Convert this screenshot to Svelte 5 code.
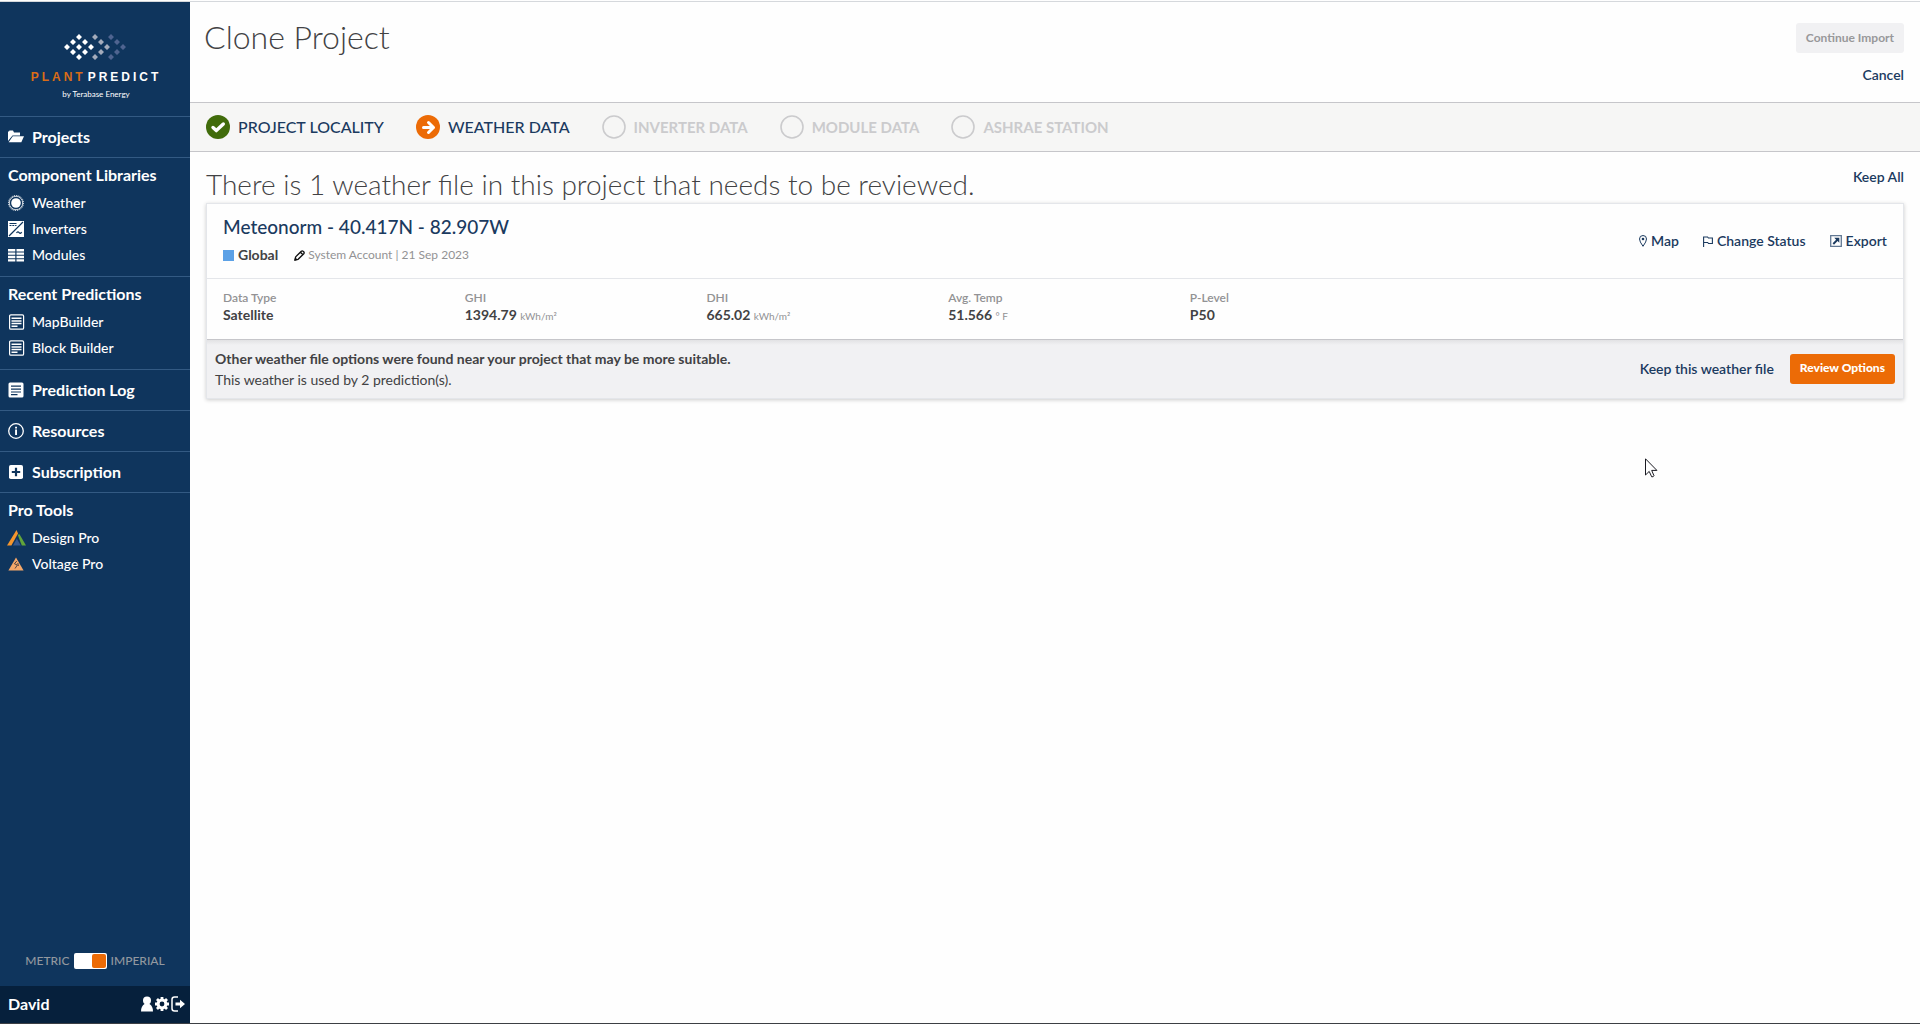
<script>
    let imperial = true;

    const libraries = [
        { name: 'Weather', icon: 'sun' },
        { name: 'Inverters', icon: 'inverter' },
        { name: 'Modules', icon: 'modules' }
    ];

    const predictions = ['MapBuilder', 'Block Builder'];

    const links = [
        { name: 'Prediction Log', icon: 'log' },
        { name: 'Resources', icon: 'info' },
        { name: 'Subscription', icon: 'plus' }
    ];

    const steps = [
        { name: 'Project Locality', state: 'done' },
        { name: 'Weather Data', state: 'current' },
        { name: 'Inverter Data', state: 'pending' },
        { name: 'Module Data', state: 'pending' },
        { name: 'Ashrae Station', state: 'pending' }
    ];

    const stats = [
        { label: 'Data Type', value: 'Satellite' },
        { label: 'GHI', value: '1394.79', unit: 'kWh/m²' },
        { label: 'DHI', value: '665.02', unit: 'kWh/m²' },
        { label: 'Avg. Temp', value: '51.566', unit: '° F' },
        { label: 'P-Level', value: 'P50' }
    ];

    // centres of the logo tiles: a diamond first, then two chevrons
    const diamond = [[15, 3], [9, 8], [21, 8], [3, 13], [15, 13], [27, 13], [9, 18], [21, 18], [15, 23]];
    const chevron = [[31, 3], [37, 8], [43, 13], [37, 18], [31, 23]];
    const lastChevron = [[47, 3], [53, 8], [59, 13], [53, 18], [47, 23]];
    const tile = ([x, y]) => `M${x - 3} ${y}l3-3 3 3-3 3z`;
</script>

{#snippet icon(name)}
    <svg class="icon" viewBox="0 0 16 16" aria-hidden="true">
        {#if name === 'folder'}
            <path fill="#fff" d="M0 2.5h1l.5-1H5l1 2h6v3H4.5L0 12z" />
            <path fill="#fff" d="M4.8 7.3H16l-2.7 6H0.6z" />
        {:else if name === 'sun'}
            <circle cx="8" cy="8" r="4.8" fill="#fff" />
            <circle cx="8" cy="8" r="6.7" fill="none" stroke="#fff" stroke-width=".8" />
            <circle cx="8" cy="8" r="7.5" fill="none" stroke="#fff" stroke-width="1" stroke-dasharray="1.2 1.15" />
        {:else if name === 'inverter'}
            <path fill="#fff" d="M0 0h16v16H0z" />
            <path fill="none" stroke="#0f355d" stroke-width="1.2" d="M1 15 15 1M1.5 2.5h7M1.5 4.5h2m.8 0h2m.8 0h1.4M8.5 12q1.3-2 2.6-.4t2.6-.4" />
        {:else if name === 'modules'}
            <path fill="#fff" d="M0 2h7.3v2.4H0zM8.5 2H16v2.4H8.5zM0 5.4h7.3v2.4H0zM8.5 5.4H16v2.4H8.5zM0 8.8h7.3v2.4H0zM8.5 8.8H16v2.4H8.5zM0 12.2h7.3v2.4H0zM8.5 12.2H16v2.4H8.5z" />
        {:else if name === 'report'}
            <rect x="1.6" y=".8" width="14" height="14.4" rx="1.3" fill="none" stroke="#fff" stroke-width="1.2" />
            <path stroke="#fff" stroke-width="1.5" d="M3.5 4.2h10M3.5 6.9h10M3.5 9.5h10M3.5 12.2h6" />
        {:else if name === 'log'}
            <rect x=".5" y=".5" width="15" height="15" rx="1.5" fill="#fff" />
            <path stroke="#0f355d" stroke-width="1.2" d="M3 4.2h10M3 7.2h10M3 10h10M3 12.6h6.5" />
        {:else if name === 'info'}
            <circle cx="8" cy="8" r="7.3" fill="none" stroke="#fff" stroke-width="1.3" />
            <path fill="#fff" d="M7.1 3.8H9v1.7H7.1zM7.1 6.5H9v5.6H7.1z" />
        {:else if name === 'plus'}
            <rect x="1" y="1" width="14" height="14" rx="1.8" fill="#fff" />
            <path stroke="#0f355d" stroke-width="2.2" d="M8 3.8v8.4M3.8 8h8.4" />
        {:else if name === 'design'}
            <path fill="#f5962d" d="M8.5 0 10 3.5 3.4 15.5H-1z" />
            <path fill="#62a53b" d="M9.7 4.7 11.5 4.2 18 15.5h-4.2z" />
            <path fill="#35588e" d="M8.8 8.7 12.8 15.5H5z" />
        {:else if name === 'voltage'}
            <path fill="#f5a869" d="M8 1.5 15.6 14.5H.4z" />
            <path fill="none" stroke="#423a3d" stroke-width=".9" d="M8.8 5 6.4 7.8l3 1.2-2.4 3.5M9.8 7l.6 3" />
        {/if}
    </svg>
{/snippet}

<div class="layout">
    <aside>
        <div class="logo">
            <svg viewBox="0 0 64 26" width="64" height="26" aria-hidden="true">
                <path fill="#fff" d={diamond.map(tile).join('')} />
                <path fill="#a3abbb" d={chevron.map(tile).join('')} />
                <path fill="#4f6490" d={lastChevron.map(tile).join('')} />
            </svg>
            <div class="brand"><b>PLANT</b><span>PREDICT</span></div>
            <small>by Terabase Energy</small>
        </div>

        <nav>
            <a class="single" href="#projects">{@render icon('folder')}Projects</a>

            <section>
                <h2>Component Libraries</h2>
                {#each libraries as item}
                    <a href="#library">{@render icon(item.icon)}{item.name}</a>
                {/each}
            </section>

            <section>
                <h2>Recent Predictions</h2>
                {#each predictions as name}
                    <a href="#prediction">{@render icon('report')}{name}</a>
                {/each}
            </section>

            {#each links as link}
                <a class="single" href="#link">{@render icon(link.icon)}{link.name}</a>
            {/each}

            <section>
                <h2>Pro Tools</h2>
                <a href="#design">{@render icon('design')}Design Pro</a>
                <a href="#voltage">{@render icon('voltage')}Voltage Pro</a>
            </section>
        </nav>

        <label class="units">
            <span>METRIC</span>
            <input type="checkbox" role="switch" bind:checked={imperial} />
            <span>IMPERIAL</span>
        </label>

        <footer>
            <span>David</span>
            <button aria-label="Profile">
                <svg viewBox="0 0 12 16" width="12" height="16">
                    <circle cx="6" cy="4.5" r="4" fill="#fff" />
                    <path fill="#fff" d="M3.5 8h5Q12 10 12 15.5H0Q0 10 3.5 8z" />
                </svg>
            </button>
            <button aria-label="Settings">
                <svg viewBox="0 0 14 14" width="14" height="14">
                    <circle cx="7" cy="7" r="3.9" fill="none" stroke="#fff" stroke-width="3" />
                    <path stroke="#fff" stroke-width="2.8" d="M7 0v2.5M7 11.5V14M0 7h2.5M11.5 7H14M2 2l1.9 1.9M10.1 10.1 12 12M2 12l1.9-1.9M10.1 3.9 12 2" />
                </svg>
            </button>
            <button aria-label="Log out">
                <svg viewBox="0 0 14 16" width="14" height="16">
                    <path fill="none" stroke="#fff" stroke-width="1.5" d="M7 1H3.5Q1 1 1 3.5v9Q1 15 3.5 15H7" />
                    <path fill="#fff" d="M4.5 6.5H9V3.8L14 8l-5 4.2V9.5H4.5z" />
                </svg>
            </button>
        </footer>
    </aside>

    <main>
        <header class="page-header">
            <h1>Clone Project</h1>
            <div class="page-actions">
                <button class="btn" disabled>Continue Import</button>
                <a href="#cancel">Cancel</a>
            </div>
        </header>

        <ol class="steps">
            {#each steps as step}
                <li class={step.state}>
                    <svg viewBox="0 0 24 24" width="24" height="24" aria-hidden="true">
                        {#if step.state === 'done'}
                            <circle cx="12" cy="12" r="12" fill="#416c0b" />
                            <path fill="none" stroke="#fff" stroke-width="3.4" stroke-linejoin="round" stroke-linecap="round" d="M7 12.5 10.3 15.6 17.3 9" />
                        {:else if step.state === 'current'}
                            <circle cx="12" cy="12" r="12" fill="#ec6b06" />
                            <path fill="none" stroke="#fff" stroke-width="3" stroke-linejoin="round" stroke-linecap="round" d="M7.5 12.5h10M12.5 7.5l5 5-5 5" />
                        {:else}
                            <circle cx="12" cy="12" r="11" fill="none" stroke="#cbcbcd" stroke-width="1.6" />
                        {/if}
                    </svg>
                    {step.name}
                </li>
            {/each}
        </ol>

        <div class="content">
            <div class="intro">
                <h2>There is 1 weather file in this project that needs to be reviewed.</h2>
                <a href="#keep-all">Keep All</a>
            </div>

            <article class="card">
                <div class="card-header">
                    <div>
                        <h3><a href="#weather-file">Meteonorm - 40.417N - 82.907W</a></h3>
                        <div class="meta">
                            <span class="swatch"></span>
                            <strong>Global</strong>
                            <svg viewBox="0 0 12 12" width="11" height="11" aria-hidden="true">
                                <path fill="none" stroke="#111" stroke-width="1.5" stroke-linejoin="round" d="M1 11 1.8 7.5 8 1.3Q9 .5 10.3 1.6T10.7 4L4.5 10.2zM7 2.5l2.5 2.5" />
                                <path fill="#111" d="M.3 11.7 1.3 8 4 10.7z" />
                            </svg>
                            <span>System Account | 21 Sep 2023</span>
                        </div>
                    </div>
                    <div class="card-actions">
                        <a href="#map">
                            <svg viewBox="0 0 8 12" width="8" height="12" aria-hidden="true">
                                <path fill="none" stroke="#1b3a5f" d="M4 11.3Q.5 6.5.5 4A3.5 3.5 0 0 1 7.5 4Q7.5 6.5 4 11.3z" />
                                <circle cx="4" cy="4" r="1.3" fill="#1b3a5f" />
                            </svg>
                            Map
                        </a>
                        <a href="#status">
                            <svg viewBox="0 0 10 11" width="10" height="11" aria-hidden="true">
                                <path fill="none" stroke="#1b3a5f" stroke-width="1.1" d="M.6 11V1h4l.8 1H9.4v5.5H5.5l-.8-1H.6" />
                            </svg>
                            Change Status
                        </a>
                        <a href="#export">
                            <svg viewBox="0 0 12 12" width="12" height="12" aria-hidden="true">
                                <path fill="none" stroke="#627893" stroke-width="1.3" d="M.7.7h10.6v10.6H.7z" />
                                <path fill="#1b3a5f" d="M4.3 2.8h5v5L7.6 6.1 4 9.7 2.6 8.3 6.1 4.7z" />
                            </svg>
                            Export
                        </a>
                    </div>
                </div>

                <dl>
                    {#each stats as stat}
                        <div>
                            <dt>{stat.label}</dt>
                            <dd>{stat.value} {#if stat.unit}<small>{stat.unit}</small>{/if}</dd>
                        </div>
                    {/each}
                </dl>

                <div class="notice">
                    <div>
                        <strong>Other weather file options were found near your project that may be more suitable.</strong>
                        <p>This weather is used by 2 prediction(s).</p>
                    </div>
                    <a href="#keep">Keep this weather file</a>
                    <button class="btn primary">Review Options</button>
                </div>
            </article>
        </div>
    </main>
</div>

<svg class="cursor" viewBox="0 0 13 20" width="13" height="20" aria-hidden="true">
    <path fill="#fff" stroke="#1a1a22" d="M.5.8v16.2l3.7-3.6 2.5 5.4q1.7.3 2.3-1L6.7 12.4h5.2z" />
</svg>

<style>
    :global(body) {
        background: #fefefe;
        color: #424244;
        font: 14px/20px Lato, "Liberation Sans", sans-serif;
    }

    .layout {
        display: flex;
        min-height: 100vh;
        box-sizing: border-box;
        padding-top: 1px;
        border-bottom: 1px solid #3c3f44;
    }

    h1, h2, h3, p, ol, dl, dd {
        margin: 0;
        padding: 0;
    }

    a {
        color: #1b3a5f;
        font-weight: 600;
        text-decoration: none;
    }

    button {
        border: 0;
        font-family: inherit;
    }

    aside {
        width: 190px;
        flex: none;
        display: flex;
        flex-direction: column;
        background: #0f355d;
        border-top: 1px solid #d5d8dc;
        color: #fff;
    }

    .logo {
        height: 82px;
        padding: 32px 0 0 2px;
        display: flex;
        flex-direction: column;
        align-items: center;
    }

    .brand {
        display: flex;
        gap: 2px;
        margin-top: 9px;
        font: bold 12px/16px "Liberation Sans", sans-serif;
        letter-spacing: 3px;
    }

    .brand b {
        color: #d96c17;
    }

    .logo small {
        margin-top: 3px;
        font-size: 8px;
        line-height: 12px;
    }

    nav a {
        display: flex;
        align-items: center;
        gap: 8px;
        height: 26px;
        padding: 0 8px;
        color: #fff;
        font-weight: 500;
    }

    nav .single {
        height: 40px;
        border-top: 1px solid #335a83;
        font-size: 16px;
        font-weight: 700;
    }

    nav section {
        padding: 4px 0 8px;
        border-top: 1px solid #335a83;
    }

    nav h2 {
        margin-bottom: 2px;
        padding: 0 8px;
        font-size: 16px;
        font-weight: 700;
        line-height: 26px;
    }

    .icon {
        width: 16px;
        height: 16px;
        flex: none;
        overflow: visible;
    }

    .units {
        display: flex;
        align-items: center;
        justify-content: center;
        gap: 4px;
        margin-top: auto;
        padding-bottom: 15px;
        color: #92989f;
        font-size: 12px;
        font-weight: 500;
    }

    .units input {
        appearance: none;
        width: 33px;
        height: 16px;
        margin: 0;
        padding: 1px;
        border-radius: 2px;
        background: #fff;
    }

    .units input::before {
        content: '';
        display: block;
        width: 14px;
        height: 14px;
        border-radius: 2px;
        background: #ec6b06;
    }

    .units input:checked::before {
        margin-left: auto;
    }

    footer {
        display: flex;
        align-items: center;
        gap: 2px;
        height: 35px;
        padding: 0 5px 2px 8px;
        background: #06203c;
        font-size: 16px;
        font-weight: 700;
    }

    footer span {
        flex: 1;
    }

    footer button {
        display: flex;
        padding: 0;
        background: none;
    }

    main {
        flex: 1;
        border-top: 1px solid #d5d8dc;
    }

    .page-header {
        display: flex;
        justify-content: space-between;
        height: 100px;
        padding: 0 16px 0 14px;
    }

    h1 {
        padding-top: 15px;
        font-size: 32px;
        font-weight: 300;
        line-height: 40px;
    }

    .page-actions {
        display: flex;
        flex-direction: column;
        align-items: flex-end;
        gap: 12px;
        padding-top: 21px;
    }

    .btn {
        height: 30px;
        padding: 0 10px 2px;
        border-radius: 3px;
        background: #f1f1f3;
        color: #98989a;
        font-size: 12px;
        font-weight: 700;
    }

    .btn.primary {
        background: #ec6b06;
        color: #fff;
        font-weight: 900;
    }

    .steps {
        display: flex;
        align-items: center;
        gap: 32px;
        height: 48px;
        padding: 0 16px;
        border-top: 1px solid #c6c6ca;
        border-bottom: 1px solid #c6c6ca;
        background: #f6f6f5;
        list-style: none;
    }

    .steps li {
        display: flex;
        align-items: center;
        gap: 8px;
        color: #1b3a5f;
        font-size: 16px;
        font-weight: 500;
        text-transform: uppercase;
    }

    .steps .pending {
        color: #cbcbcd;
        font-size: 15px;
        font-weight: 700;
    }

    .content {
        padding: 15px 16px;
    }

    .intro {
        display: flex;
        justify-content: space-between;
    }

    .intro h2 {
        padding-bottom: 2px;
        font-size: 28px;
        font-weight: 300;
        line-height: 34px;
    }

    .card {
        border: 1px solid #e4e6ea;
        box-shadow: 0 1px 4px rgba(0, 0, 0, 0.2);
    }

    .card-header {
        display: flex;
        align-items: center;
        justify-content: space-between;
        height: 74px;
        padding: 0 16px;
        border-bottom: 1px solid #e4e6ea;
    }

    h3 {
        font-size: 19px;
        line-height: 28px;
    }

    h3 a {
        font-weight: 500;
    }

    .meta {
        display: flex;
        align-items: center;
        padding: 4px 0;
        line-height: 20px;
        color: #929294;
        font-size: 12px;
    }

    .meta strong {
        margin: 0 16px 0 4px;
        color: #424244;
        font-size: 14px;
    }

    .meta svg {
        margin-right: 3px;
    }

    .swatch {
        width: 11px;
        height: 11px;
        background: #5ca1e6;
    }

    .card-actions {
        display: flex;
        gap: 24px;
    }

    .card-actions a {
        display: flex;
        align-items: center;
        gap: 4px;
    }

    dl {
        display: grid;
        grid-template-columns: repeat(7, 1fr);
        height: 60px;
        padding-right: 4px;
        border-bottom: 1px solid #c6c6ca;
    }

    dl div {
        padding: 10px 0 0 16px;
    }

    dt {
        color: #929294;
        font-size: 12px;
        font-weight: 600;
        line-height: 18px;
    }

    dd {
        font-weight: 700;
        line-height: 16px;
    }

    dd small {
        color: #929294;
        font-size: 10px;
        font-weight: 400;
    }

    .notice {
        display: flex;
        align-items: center;
        gap: 16px;
        padding: 7px 8px 8px;
        background: linear-gradient(#e2e2e4, #f1f1f3 5px);
    }

    .notice div {
        flex: 1;
        padding-top: 1px;
        line-height: 21px;
    }

    .cursor {
        position: absolute;
        left: 1645px;
        top: 458px;
    }
</style>
